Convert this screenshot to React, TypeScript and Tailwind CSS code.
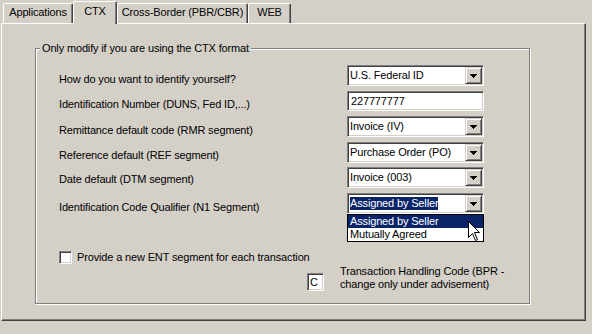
import React from "react";

const sunken =
  "border border-t-[#808080] border-l-[#808080] border-r-white border-b-white shadow-[inset_1px_1px_0_#404040,inset_-1px_-1px_0_#d4d0c8]";

function Arrow() {
  return (
    <svg width="7" height="4" viewBox="0 0 7 4" shapeRendering="crispEdges">
      <rect x="0" y="0" width="7" height="1" fill="#000" />
      <rect x="1" y="1" width="5" height="1" fill="#000" />
      <rect x="2" y="2" width="3" height="1" fill="#000" />
      <rect x="3" y="3" width="1" height="1" fill="#000" />
    </svg>
  );
}

function Combo({ value, selected }: { value: string; selected?: boolean }) {
  return (
    <div className={`w-[137px] h-[21px] bg-white flex p-[1px] ${sunken}`}>
      <div className="flex-1 flex items-center pl-[1px] whitespace-nowrap overflow-hidden">
        <span className={selected ? "bg-[#0a246a] text-white" : ""}>{value}</span>
      </div>
      <div className="w-[17px] h-full bg-[#d4d0c8] border border-t-[#d4d0c8] border-l-[#d4d0c8] border-r-[#404040] border-b-[#404040] shadow-[inset_1px_1px_0_#fff,inset_-1px_-1px_0_#808080] flex items-center justify-center">
        <Arrow />
      </div>
    </div>
  );
}

function Tab({ label, width, active }: { label: string; width: string; active?: boolean }) {
  return (
    <div
      className={`${width} ${
        active ? "h-[23px] -mb-[1px] relative z-10 pt-[3px]" : "h-[20px] pt-[2px]"
      } bg-[#d4d0c8] border-t border-l border-white border-r border-r-[#404040] rounded-t-[2px] shadow-[inset_-1px_0_0_#808080] flex justify-center whitespace-nowrap`}
    >
      {label}
    </div>
  );
}

function Row({ label, pt, h, children }: { label: string; pt: string; h: string; children: React.ReactNode }) {
  return (
    <div className={`flex ${h}`}>
      <div className={`w-[288px] ${pt} whitespace-nowrap`}>{label}</div>
      <div className="relative">{children}</div>
    </div>
  );
}

export default function App() {
  return (
    <div className="w-[592px] h-[334px] bg-[#d4d0c8] overflow-hidden text-black text-[11px] leading-[13px] tracking-[-0.15px] font-['Liberation_Sans',Arial,sans-serif]">
      <div className="flex items-end h-[23px] pl-[3px]">
        <Tab label="Applications" width="w-[70px]" />
        <Tab label="CTX" width="w-[44px]" active />
        <Tab label="Cross-Border (PBR/CBR)" width="w-[131px]" />
        <Tab label="WEB" width="w-[43px]" />
      </div>
      <div className="ml-[1px] w-[585px] h-[298px] border-t border-l border-white border-r border-b border-r-[#404040] border-b-[#404040] shadow-[inset_-1px_-1px_0_#808080] flex flex-col">
        <div className="mt-[24px] ml-[33px] w-[495px] h-[256px] border border-[#808080] shadow-[inset_1px_1px_0_#fff,1px_1px_0_#fff] flex flex-col">
          <div className="-mt-[7px] ml-[4px] px-[2px] w-fit bg-[#d4d0c8] whitespace-nowrap">
            Only modify if you are using the CTX format
          </div>
          <div className="mt-[10px] pl-[23px] flex flex-col">
            <Row label="How do you want to identify yourself?" pt="pt-[8px]" h="h-[26px]">
              <Combo value="U.S. Federal ID" />
            </Row>
            <Row label="Identification Number (DUNS, Fed ID,...)" pt="pt-[7px]" h="h-[25px]">
              <div className={`w-[137px] h-[20px] bg-white flex items-center pl-[3px] ${sunken}`}>227777777</div>
            </Row>
            <Row label="Remittance default code (RMR segment)" pt="pt-[8px]" h="h-[26px]">
              <Combo value="Invoice (IV)" />
            </Row>
            <Row label="Reference default (REF segment)" pt="pt-[7px]" h="h-[25px]">
              <Combo value="Purchase Order (PO)" />
            </Row>
            <Row label="Date default (DTM segment)" pt="pt-[6px]" h="h-[26px]">
              <Combo value="Invoice (003)" />
            </Row>
            <Row label="Identification Code Qualifier (N1 Segment)" pt="pt-[8px]" h="h-[21px]">
              <Combo value="Assigned by Seller" selected />
              <div className="absolute left-0 top-[21px] w-[137px] bg-white border border-black z-20 flex flex-col">
                <div className="h-[13px] bg-[#0a246a] text-white pl-[2px] flex items-center">Assigned by Seller</div>
                <div className="h-[13px] pl-[2px] flex items-center">Mutually Agreed</div>
              </div>
              <svg
                className="absolute left-[121px] top-[28px] z-30"
                width="13"
                height="21"
                viewBox="0 0 13 21"
                shapeRendering="crispEdges"
              >
                <polygon
                  points="0.5,0.5 0.5,16.5 4.5,12.5 7.5,19.5 9.5,18.5 6.5,11.5 11.5,11.5"
                  fill="#fff"
                  stroke="#000"
                  strokeWidth="1"
                  shapeRendering="geometricPrecision"
                />
              </svg>
            </Row>
            <div className="mt-[37px] flex items-center">
              <div className={`w-[13px] h-[13px] bg-white ${sunken}`} />
              <div className="ml-[5px] whitespace-nowrap">Provide a new ENT segment for each transaction</div>
            </div>
            <div className="mt-[1px] pl-[248px] flex items-start">
              <div className={`mt-[8px] w-[17px] h-[18px] bg-white flex items-center pl-[2px] ${sunken}`}>C</div>
              <div className="ml-[16px] flex flex-col whitespace-nowrap">
                <span>Transaction Handling Code (BPR -</span>
                <span>change only under advisement)</span>
              </div>
            </div>
          </div>
        </div>
      </div>
    </div>
  );
}
